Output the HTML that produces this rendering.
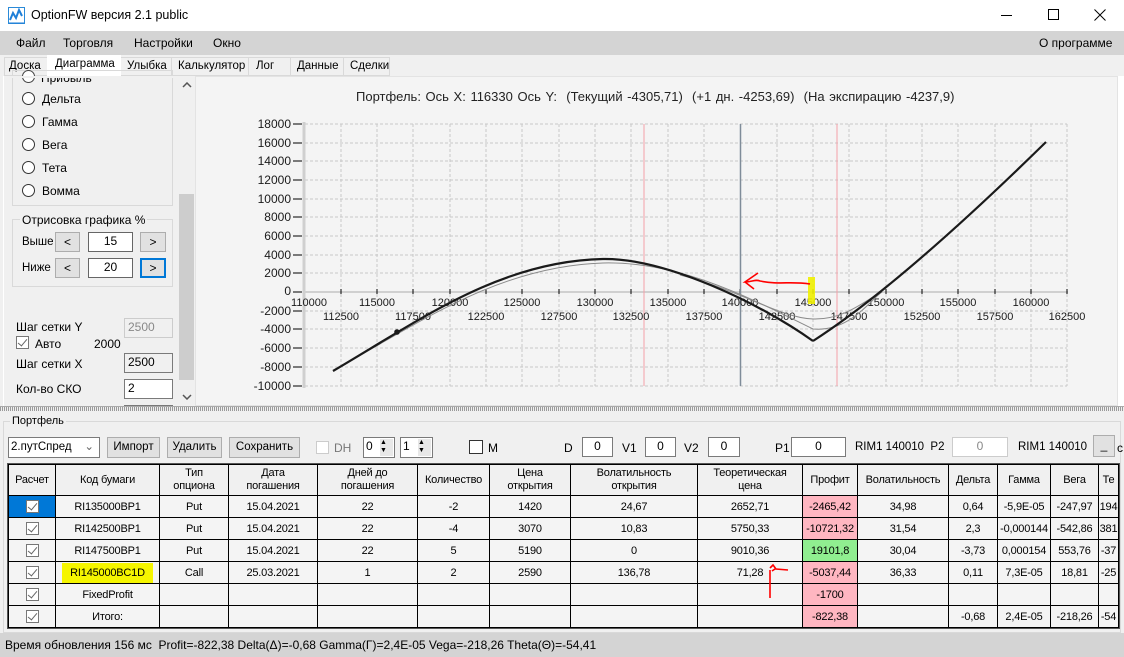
<!DOCTYPE html>
<html><head><meta charset="utf-8"><style>
*{box-sizing:border-box;margin:0;padding:0}
body{width:1124px;height:657px;overflow:hidden;background:#f0f0f0;font-family:"Liberation Sans",sans-serif;font-size:12px;color:#000;position:relative}
.a{position:absolute}
.t{font-size:12px;white-space:nowrap}
.box{position:absolute;background:#fff;border:1px solid #7a7a7a;text-align:center;font-size:12px;line-height:17px}
.btn{position:absolute;background:#e1e1e1;border:1px solid #adadad;text-align:center;font-size:12px;line-height:18px}
.radio{position:absolute;width:13px;height:13px;border:1px solid #333;border-radius:50%;background:#fff}
table{border-collapse:collapse;table-layout:fixed;font-size:11px;letter-spacing:-0.2px}
td{border:1px solid #000;text-align:center;height:22px;background:#f4f4f4;white-space:nowrap;overflow:hidden;padding:0}
tr.h td{height:31px;background:#f0f0f0;line-height:13px}
.cb{display:inline-block;width:13px;height:13px;border:1px solid #777;background:#fff;vertical-align:middle;position:relative}
.cb:after{content:"";position:absolute;left:3px;top:0px;width:4px;height:8px;border:solid #666;border-width:0 1.5px 1.5px 0;transform:rotate(40deg)}
.pk{background:#ffb6c1}
.gr{background:#90ee90}
.tb{font-size:11.5px}
</style></head><body>
<!-- title bar -->
<div class="a" style="left:0;top:0;width:1124px;height:31px;background:#fff"></div>
<svg class="a" style="left:8px;top:7px" width="17" height="17" viewBox="0 0 17 17"><rect x="0.5" y="0.5" width="16" height="16" fill="#fff" stroke="#2a8ad8"/><path d="M2 13 L5 6 L8 11 L11 3 L14 9" fill="none" stroke="#1e7fd8" stroke-width="2"/><path d="M1 16 H16" stroke="#1e7fd8"/></svg>
<div class="a" style="left:31px;top:8px;font-size:12.5px">OptionFW версия 2.1 public</div>
<div class="a" style="left:1001px;top:15px;width:11px;height:1px;background:#000"></div>
<div class="a" style="left:1048px;top:9px;width:11px;height:11px;border:1px solid #000"></div>
<svg class="a" style="left:1094px;top:9px" width="12" height="12"><path d="M0.5 0.5L11.5 11.5M11.5 0.5L0.5 11.5" stroke="#000"/></svg>
<!-- menu -->
<div class="a" style="left:0;top:31px;width:1124px;height:24px;background:#d4d4d4"></div>
<div class="a t" style="left:16px;top:36px">Файл</div>
<div class="a t" style="left:63px;top:36px">Торговля</div>
<div class="a t" style="left:134px;top:36px">Настройки</div>
<div class="a t" style="left:213px;top:36px">Окно</div>
<div class="a t" style="left:1039px;top:36px">О программе</div>
<!-- tabs -->
<div class="a" style="left:4px;top:57px;width:386px;height:19px;background:#f0f0f0;border:1px solid #d9d9d9"></div>
<div class="a t tb" style="left:9px;top:60px">Доска</div>
<div class="a" style="left:47px;top:55px;width:74px;height:22px;background:#fff"></div>
<div class="a t tb" style="left:55px;top:58px">Диаграмма</div>
<div class="a t tb" style="left:127px;top:60px">Улыбка</div>
<div class="a" style="left:171px;top:58px;width:1px;height:18px;background:#d9d9d9"></div>
<div class="a t tb" style="left:178px;top:60px">Калькулятор</div>
<div class="a" style="left:248px;top:58px;width:1px;height:18px;background:#d9d9d9"></div>
<div class="a t tb" style="left:256px;top:60px">Лог</div>
<div class="a" style="left:290px;top:58px;width:1px;height:18px;background:#d9d9d9"></div>
<div class="a t tb" style="left:297px;top:60px">Данные</div>
<div class="a" style="left:343px;top:58px;width:1px;height:18px;background:#d9d9d9"></div>
<div class="a t tb" style="left:350px;top:60px">Сделки</div>
<!-- main panel -->
<div class="a" style="left:0;top:76px;width:1124px;height:333px;background:#fff;border-left:3px solid #f0f0f0"></div>
<div class="a" style="left:4px;top:76px;width:174px;height:330px;background:#f0f0f0"></div>
<div class="a" style="left:12px;top:70px;width:161px;height:136px;border:1px solid #d9d9d9"></div>
<div class="radio" style="left:22px;top:70px;border-color:#444"></div>
<div class="a t" style="left:41px;top:71px;clip-path:inset(5px 0 0 0)">Прибыль</div>
<div class="a" style="left:4px;top:76px;width:174px;height:2px;background:#f0f0f0"></div>
<div class="radio" style="left:22px;top:92px"></div><div class="a t" style="left:42px;top:92px">Дельта</div>
<div class="radio" style="left:22px;top:115px"></div><div class="a t" style="left:42px;top:115px">Гамма</div>
<div class="radio" style="left:22px;top:138px"></div><div class="a t" style="left:42px;top:138px">Вега</div>
<div class="radio" style="left:22px;top:161px"></div><div class="a t" style="left:42px;top:161px">Тета</div>
<div class="radio" style="left:22px;top:184px"></div><div class="a t" style="left:42px;top:184px">Вомма</div>
<div class="a" style="left:12px;top:219px;width:161px;height:68px;border:1px solid #d9d9d9"></div>
<div class="a t" style="left:20px;top:213px;background:#f0f0f0;padding:0 2px">Отрисовка графика %</div>
<div class="a t" style="left:22px;top:236px;font-size:11.5px">Выше</div>
<div class="btn" style="left:55px;top:232px;width:25px;height:20px">&lt;</div>
<div class="box" style="left:88px;top:232px;width:45px;height:20px;border-color:#666">15</div>
<div class="btn" style="left:140px;top:232px;width:26px;height:20px">&gt;</div>
<div class="a t" style="left:22px;top:262px;font-size:11.5px">Ниже</div>
<div class="btn" style="left:55px;top:258px;width:25px;height:20px">&lt;</div>
<div class="box" style="left:88px;top:258px;width:45px;height:20px;border-color:#666">20</div>
<div class="btn" style="left:140px;top:258px;width:26px;height:20px;border:2px solid #0078d7;line-height:16px">&gt;</div>
<div class="a t" style="left:16px;top:320px">Шаг сетки Y</div>
<div class="box" style="left:124px;top:318px;width:49px;height:20px;background:#f0f0f0;color:#888;border-color:#ccc;text-align:left;padding-left:3px">2500</div>
<div class="a" style="left:16px;top:336px;width:13px;height:13px"><span class="cb" style="display:block"></span></div>
<div class="a t" style="left:35px;top:337px">Авто</div>
<div class="a t" style="left:94px;top:337px">2000</div>
<div class="a t" style="left:16px;top:357px">Шаг сетки X</div>
<div class="box" style="left:124px;top:353px;width:49px;height:20px;background:#f0f0f0;text-align:left;padding-left:3px">2500</div>
<div class="a t" style="left:16px;top:382px">Кол-во СКО</div>
<div class="box" style="left:124px;top:379px;width:49px;height:20px;text-align:left;padding-left:3px">2</div>
<div class="a" style="left:124px;top:405px;width:49px;height:4px;border:1px solid #7a7a7a;border-bottom:none"></div>
<!-- scrollbar -->
<div class="a" style="left:178px;top:76px;width:17px;height:330px;background:#f0f0f0"></div>
<div class="a" style="left:179px;top:194px;width:15px;height:186px;background:#cdcdcd"></div>
<svg class="a" style="left:182px;top:82px" width="10" height="6"><path d="M1 5L5 1L9 5" stroke="#555" fill="none" stroke-width="1.5"/></svg>
<svg class="a" style="left:182px;top:394px" width="10" height="6"><path d="M1 1L5 5L9 1" stroke="#555" fill="none" stroke-width="1.5"/></svg>
<!-- chart -->
<div class="a" style="left:195px;top:76px;width:923px;height:330px;background:#f4f4f4;border:1px solid #e3e3e3"></div>
<div class="a t" style="left:356px;top:89px;font-size:13px;color:#222;word-spacing:1px">Портфель: Ось X: 116330 Ось Y: &nbsp;(Текущий -4305,71) &nbsp;(+1 дн. -4253,69) &nbsp;(На экспирацию -4237,9)</div>
<svg class="a" style="left:195px;top:76px" width="923" height="330" viewBox="195 76 923 330">
<g stroke="#c8c8c8" stroke-dasharray="3,2" stroke-width="1">
<path d="M341 124V386M377 124V386M413 124V386M450 124V386M486 124V386M522 124V386M559 124V386M595 124V386M631 124V386M668 124V386M704 124V386M777 124V386M813 124V386M849 124V386M886 124V386M922 124V386M958 124V386M995 124V386M1031 124V386M1067 124V386"/>
<path d="M305 124H1067M305 143H1067M305 161H1067M305 180H1067M305 199H1067M305 217H1067M305 236H1067M305 255H1067M305 273H1067M305 311H1067M305 329H1067M305 348H1067M305 367H1067M305 386H1067"/>
</g>
<path d="M304 122V388" stroke="#cfcfcf" stroke-width="3"/>
<path d="M304 292H1068" stroke="#d0d0d0" stroke-width="2"/>
<g stroke="#000" stroke-width="1">
<path d="M293 124H302M293 143H302M293 161H302M293 180H302M293 199H302M293 217H302M293 236H302M293 255H302M293 273H302M293 292H302M293 311H302M293 329H302M293 348H302M293 367H302M293 386H302"/>
<path d="M341 289V294M377 289V294M413 289V294M450 289V294M486 289V294M522 289V294M559 289V294M595 289V294M631 289V294M668 289V294M704 289V294M740 289V294M777 289V294M813 289V294M849 289V294M886 289V294M922 289V294M958 289V294M995 289V294M1031 289V294M1067 289V294"/>
</g>
<path d="M644 124V386" stroke="#f4a0a8" stroke-width="1"/>
<path d="M837 124V386" stroke="#f4a0a8" stroke-width="1"/>
<path d="M740.5 124V386" stroke="#7f8c99" stroke-width="1.5"/>
<g font-family="Liberation Sans" font-size="12" fill="#1a1a1a" text-anchor="end">
<text x="291" y="128">18000</text><text x="291" y="147">16000</text><text x="291" y="165">14000</text><text x="291" y="184">12000</text><text x="291" y="203">10000</text><text x="291" y="221">8000</text><text x="291" y="240">6000</text><text x="291" y="259">4000</text><text x="291" y="277">2000</text><text x="291" y="295">0</text><text x="291" y="315">-2000</text><text x="291" y="333">-4000</text><text x="291" y="352">-6000</text><text x="291" y="371">-8000</text><text x="291" y="390">-10000</text>
</g>
<g font-family="Liberation Sans" font-size="11" fill="#1a1a1a" text-anchor="middle">
<text x="309" y="306">110000</text><text x="377" y="306">115000</text><text x="450" y="306">120000</text><text x="522" y="306">125000</text><text x="595" y="306">130000</text><text x="668" y="306">135000</text><text x="740" y="306">140000</text><text x="813" y="306">145000</text><text x="886" y="306">150000</text><text x="958" y="306">155000</text><text x="1031" y="306">160000</text>
<text x="341" y="320">112500</text><text x="413" y="320">117500</text><text x="486" y="320">122500</text><text x="559" y="320">127500</text><text x="631" y="320">132500</text><text x="704" y="320">137500</text><text x="777" y="320">142500</text><text x="849" y="320">147500</text><text x="922" y="320">152500</text><text x="995" y="320">157500</text><text x="1067" y="320">162500</text>
</g>
<g fill="none">
<path d="M333 371 C420 322 500 266 603 263 C680 261 750 298 813 329 C850 332 870 300 882 292" stroke="#8a8a8a" stroke-width="1"/>
<path d="M680 275 C740 290 780 318 813 319 C845 320 865 300 882 292" stroke="#8a8a8a" stroke-width="1"/>
<path d="M333 371 C420 320 500 261 603 259 C665 258 760 303 813 341" stroke="#1a1a1a" stroke-width="2.2"/>
<path d="M813 341 Q900 285 1046 142" stroke="#1a1a1a" stroke-width="2.2"/>
</g>
<circle cx="397" cy="332" r="2.8" fill="#1a1a1a"/>
<rect x="808" y="277" width="7" height="27" fill="#f0f000" opacity="0.9"/>
<path d="M810 284 C790 281 780 285 760 281 C755 279 752 282 745 282 L758 273 M745 282 L754 289" stroke="#f00" stroke-width="1.6" fill="none"/>
</svg>
<!-- splitter -->
<div class="a" style="left:0;top:406px;width:1124px;height:5px;background:repeating-linear-gradient(90deg,#9a9a9a 0 1px,#f0f0f0 1px 2px);border-top:1px solid #aaa"></div>
<!-- portfolio group -->
<div class="a" style="left:3px;top:421px;width:1118px;height:212px;border:1px solid #d9d9d9"></div>
<div class="a t" style="left:10px;top:415px;background:#f0f0f0;padding:0 2px;font-size:11px">Портфель</div>
<div class="box" style="left:8px;top:437px;width:92px;height:21px;text-align:left;padding-left:2px;line-height:19px;font-size:11.5px">2.путСпред <span style="position:absolute;right:5px;color:#666">&#8964;</span></div>
<div class="btn" style="left:107px;top:437px;width:53px;height:21px;font-size:11.5px">Импорт</div>
<div class="btn" style="left:167px;top:437px;width:55px;height:21px;font-size:11.5px">Удалить</div>
<div class="btn" style="left:229px;top:437px;width:71px;height:21px;font-size:11.5px">Сохранить</div>
<div class="a" style="left:316px;top:441px;width:13px;height:13px;border:1px solid #ccc;background:#fff"></div>
<div class="a t" style="left:334px;top:441px;color:#777">DH</div>
<div class="box" style="left:363px;top:437px;width:32px;height:21px;text-align:left;padding-left:2px">0<span style="position:absolute;right:1px;top:1px;width:13px;height:17px;background:#e8e8e8;font-size:7px;line-height:8px">▲<br>▼</span></div>
<div class="box" style="left:400px;top:437px;width:33px;height:21px;text-align:left;padding-left:2px">1<span style="position:absolute;right:1px;top:1px;width:13px;height:17px;background:#e8e8e8;font-size:7px;line-height:8px">▲<br>▼</span></div>
<div class="a" style="left:469px;top:440px;width:14px;height:14px;border:1px solid #333;background:#fff"></div>
<div class="a t" style="left:488px;top:441px">M</div>
<div class="a t" style="left:564px;top:441px">D</div><div class="box" style="left:582px;top:437px;width:31px;height:20px">0</div>
<div class="a t" style="left:622px;top:441px">V1</div><div class="box" style="left:645px;top:437px;width:31px;height:20px">0</div>
<div class="a t" style="left:684px;top:441px">V2</div><div class="box" style="left:708px;top:437px;width:32px;height:20px">0</div>
<div class="a t" style="left:775px;top:441px">P1</div><div class="box" style="left:791px;top:437px;width:55px;height:20px">0</div>
<div class="a t" style="left:855px;top:441px;font-size:11.5px">RIM1 140010 &nbsp;P2</div>
<div class="box" style="left:952px;top:437px;width:56px;height:20px;border-color:#ccc;color:#888">0</div>
<div class="a t" style="left:1018px;top:441px;font-size:11.5px">RIM1 140010</div>
<div class="btn" style="left:1093px;top:435px;width:22px;height:22px">_</div>
<div class="a t" style="left:1117px;top:441px">c</div>
<!-- table -->
<div class="a" style="left:7px;top:463px;width:1113px;height:166px;border:1px solid #555;overflow:hidden">
<table style="width:1110px">
<colgroup><col style="width:47px"><col style="width:104px"><col style="width:69px"><col style="width:89px"><col style="width:100px"><col style="width:72px"><col style="width:81px"><col style="width:127px"><col style="width:105px"><col style="width:55px"><col style="width:91px"><col style="width:49px"><col style="width:53px"><col style="width:48px"><col style="width:20px"></colgroup>
<tr class="h"><td>Расчет</td><td>Код бумаги</td><td>Тип<br>опциона</td><td>Дата<br>погашения</td><td>Дней до<br>погашения</td><td>Количество</td><td>Цена<br>открытия</td><td>Волатильность<br>открытия</td><td>Теоретическая<br>цена</td><td>Профит</td><td>Волатильность</td><td>Дельта</td><td>Гамма</td><td>Вега</td><td>Те</td></tr>
<tr><td style="background:#0078d7"><span class="cb"></span></td><td>RI135000BP1</td><td>Put</td><td>15.04.2021</td><td>22</td><td>-2</td><td>1420</td><td>24,67</td><td>2652,71</td><td class="pk">-2465,42</td><td>34,98</td><td>0,64</td><td>-5,9E-05</td><td>-247,97</td><td>194</td></tr>
<tr><td><span class="cb"></span></td><td>RI142500BP1</td><td>Put</td><td>15.04.2021</td><td>22</td><td>-4</td><td>3070</td><td>10,83</td><td>5750,33</td><td class="pk">-10721,32</td><td>31,54</td><td>2,3</td><td>-0,000144</td><td>-542,86</td><td>381</td></tr>
<tr><td><span class="cb"></span></td><td>RI147500BP1</td><td>Put</td><td>15.04.2021</td><td>22</td><td>5</td><td>5190</td><td>0</td><td>9010,36</td><td class="gr">19101,8</td><td>30,04</td><td>-3,73</td><td>0,000154</td><td>553,76</td><td>-37</td></tr>
<tr><td><span class="cb"></span></td><td><span style="background:#f5f500;padding:4px 8px 6px">RI145000BC1D</span></td><td>Call</td><td>25.03.2021</td><td>1</td><td>2</td><td>2590</td><td>136,78</td><td>71,28</td><td class="pk">-5037,44</td><td>36,33</td><td>0,11</td><td>7,3E-05</td><td>18,81</td><td>-25</td></tr>
<tr><td><span class="cb"></span></td><td>FixedProfit</td><td></td><td></td><td></td><td></td><td></td><td></td><td></td><td class="pk">-1700</td><td></td><td></td><td></td><td></td><td></td></tr>
<tr><td><span class="cb"></span></td><td>Итого:</td><td></td><td></td><td></td><td></td><td></td><td></td><td></td><td class="pk">-822,38</td><td></td><td>-0,68</td><td>2,4E-05</td><td>-218,26</td><td>-54</td></tr>
</table></div>
<svg class="a" style="left:764px;top:562px" width="28" height="40"><path d="M6 6 L9 3 L12 7 L24 8 M11 7 L8 9 M6 8 L6 36" stroke="#f00" stroke-width="1.6" fill="none"/></svg>
<!-- status -->
<div class="a" style="left:0;top:633px;width:1124px;height:24px;background:#d4d4d4"></div>
<div class="a t" style="left:5px;top:638px">Время обновления 156 мс &nbsp;Profit=-822,38 Delta(Δ)=-0,68 Gamma(Γ)=2,4E-05 Vega=-218,26 Theta(Θ)=-54,41</div>
</body></html>
